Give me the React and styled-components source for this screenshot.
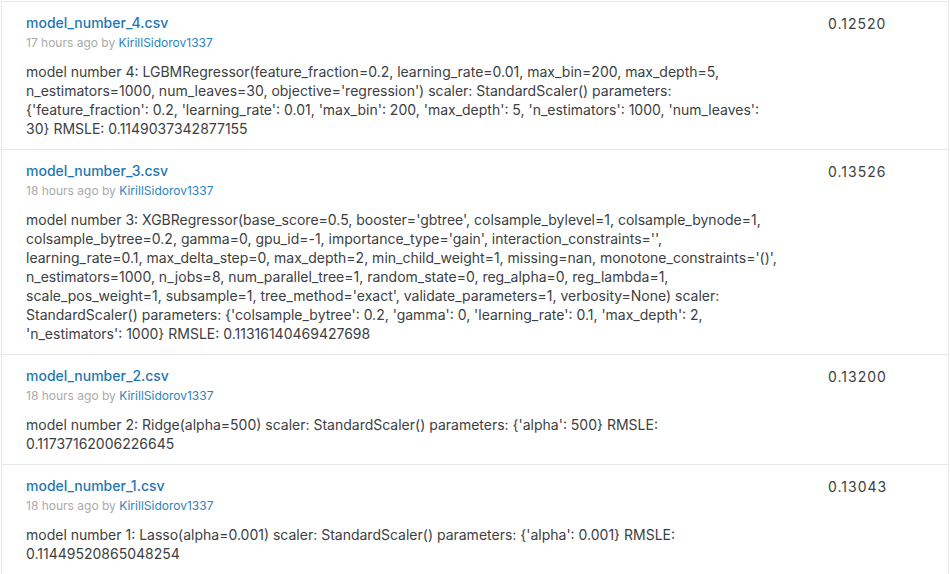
import styled, { createGlobalStyle } from "styled-components";

const GlobalStyle = createGlobalStyle`
  body {
    margin: 0;
    background: #ffffff;
    font-family: Inter, "Noto Sans", sans-serif;
  }
`;

const Page = styled.div`
  padding: 1px 1px 0 1px;
`;

const SubmissionList = styled.div`
  border: 1px solid #e8e8e8;
  border-bottom: none;
`;

const Row = styled.div`
  display: grid;
  grid-template-columns: 1fr 120px;
  border-bottom: 1px solid #e8e8e8;
`;

const Info = styled.div`
  padding: 11px 46px 11px 24px;
`;

const Title = styled.a`
  display: block;
  font-size: 14px;
  line-height: 20px;
  font-weight: 500;
  color: #1f76b4;
  text-decoration: none;
  cursor: pointer;
`;

const Meta = styled.div`
  font-size: 12px;
  line-height: 20px;
  color: #aaaaaa;

  span {
    color: #2b83c0;
  }
`;

const Description = styled.div`
  margin-top: 9px;
  font-size: 14px;
  line-height: 19px;
  color: #3c4043;
`;

const Score = styled.div`
  padding-top: 11px;
  font-size: 14px;
  line-height: 22px;
  letter-spacing: 1px;
  color: #3c4043;
`;

const submissions = [
  {
    name: "model_number_4.csv",
    when: "17 hours ago",
    score: "0.12520",
    text: "model number 4: LGBMRegressor(feature_fraction=0.2, learning_rate=0.01, max_bin=200, max_depth=5, n_estimators=1000, num_leaves=30, objective='regression') scaler: StandardScaler() parameters: {'feature_fraction': 0.2, 'learning_rate': 0.01, 'max_bin': 200, 'max_depth': 5, 'n_estimators': 1000, 'num_leaves': 30} RMSLE: 0.1149037342877155",
  },
  {
    name: "model_number_3.csv",
    when: "18 hours ago",
    score: "0.13526",
    text: "model number 3: XGBRegressor(base_score=0.5, booster='gbtree', colsample_bylevel=1, colsample_bynode=1, colsample_bytree=0.2, gamma=0, gpu_id=-1, importance_type='gain', interaction_constraints='', learning_rate=0.1, max_delta_step=0, max_depth=2, min_child_weight=1, missing=nan, monotone_constraints='()', n_estimators=1000, n_jobs=8, num_parallel_tree=1, random_state=0, reg_alpha=0, reg_lambda=1, scale_pos_weight=1, subsample=1, tree_method='exact', validate_parameters=1, verbosity=None) scaler: StandardScaler() parameters: {'colsample_bytree': 0.2, 'gamma': 0, 'learning_rate': 0.1, 'max_depth': 2, 'n_estimators': 1000} RMSLE: 0.11316140469427698",
  },
  {
    name: "model_number_2.csv",
    when: "18 hours ago",
    score: "0.13200",
    text: "model number 2: Ridge(alpha=500) scaler: StandardScaler() parameters: {'alpha': 500} RMSLE: 0.11737162006226645",
  },
  {
    name: "model_number_1.csv",
    when: "18 hours ago",
    score: "0.13043",
    text: "model number 1: Lasso(alpha=0.001) scaler: StandardScaler() parameters: {'alpha': 0.001} RMSLE: 0.11449520865048254",
  },
];

const App = () => {
  return (
    <Page>
      <GlobalStyle />
      <SubmissionList>
        {submissions.map((s) => (
          <Row key={s.name}>
            <Info>
              <Title>{s.name}</Title>
              <Meta>
                {s.when} by <span>KirillSidorov1337</span>
              </Meta>
              <Description>{s.text}</Description>
            </Info>
            <Score>{s.score}</Score>
          </Row>
        ))}
      </SubmissionList>
    </Page>
  );
};

export default App;
